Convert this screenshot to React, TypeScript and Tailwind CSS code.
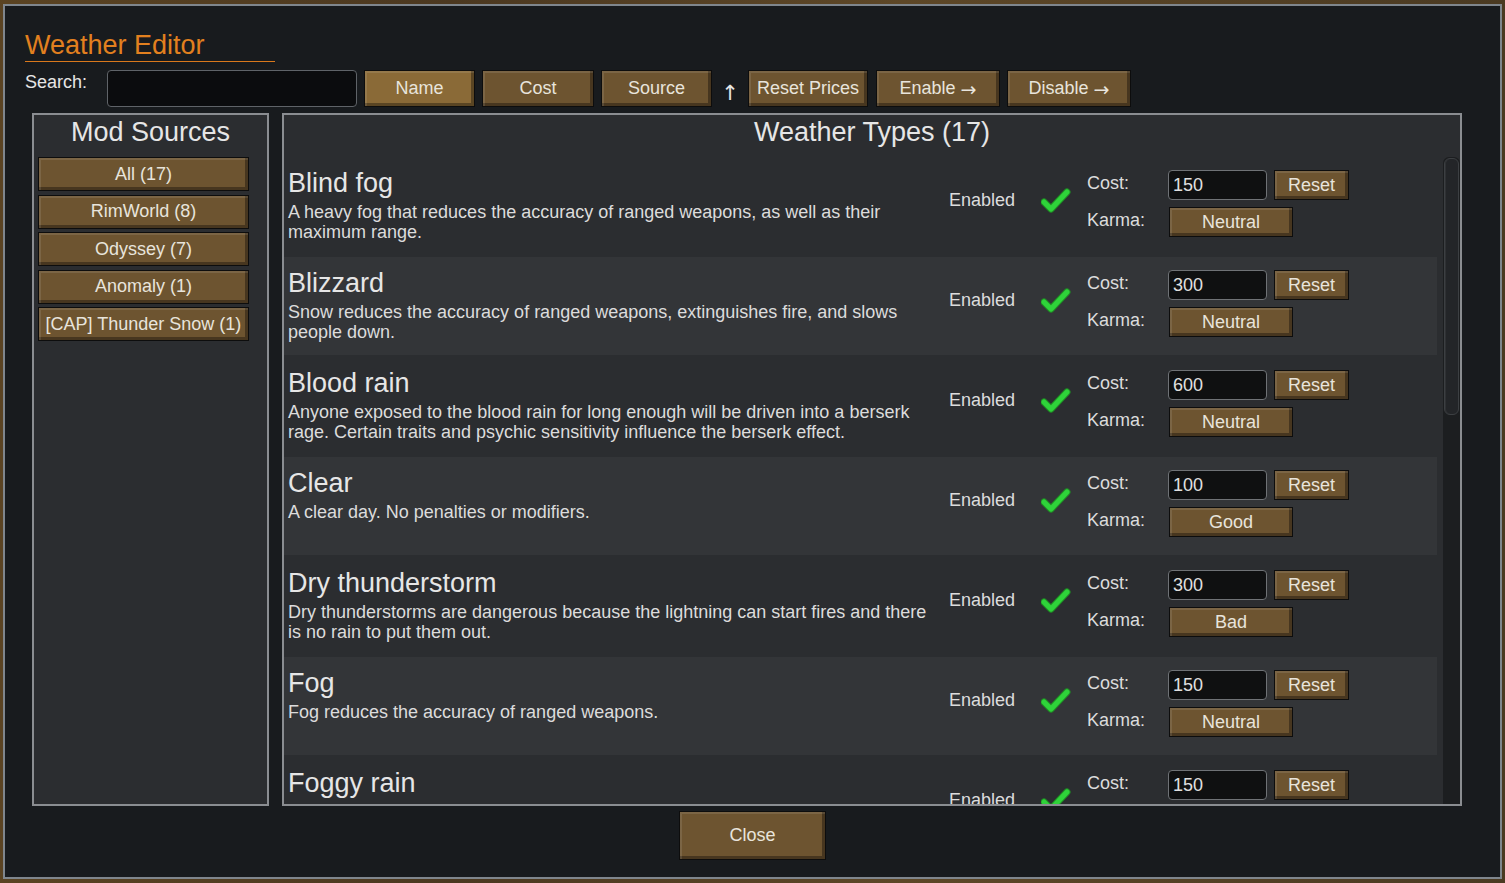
import React from "react";

const FONT = { fontFamily: '"Liberation Sans", Arial, sans-serif' };
const ARROW = { fontFamily: '"DejaVu Sans", sans-serif' };

type Row = { name: string; desc: string[]; cost: string; karma: string };

const rows: Row[] = [
  {
    name: "Blind fog",
    desc: [
      "A heavy fog that reduces the accuracy of ranged weapons, as well as their",
      "maximum range.",
    ],
    cost: "150",
    karma: "Neutral",
  },
  {
    name: "Blizzard",
    desc: [
      "Snow reduces the accuracy of ranged weapons, extinguishes fire, and slows",
      "people down.",
    ],
    cost: "300",
    karma: "Neutral",
  },
  {
    name: "Blood rain",
    desc: [
      "Anyone exposed to the blood rain for long enough will be driven into a berserk",
      "rage. Certain traits and psychic sensitivity influence the berserk effect.",
    ],
    cost: "600",
    karma: "Neutral",
  },
  {
    name: "Clear",
    desc: ["A clear day. No penalties or modifiers."],
    cost: "100",
    karma: "Good",
  },
  {
    name: "Dry thunderstorm",
    desc: [
      "Dry thunderstorms are dangerous because the lightning can start fires and there",
      "is no rain to put them out.",
    ],
    cost: "300",
    karma: "Bad",
  },
  {
    name: "Fog",
    desc: ["Fog reduces the accuracy of ranged weapons."],
    cost: "150",
    karma: "Neutral",
  },
  {
    name: "Foggy rain",
    desc: [
      "Fog and rain reduce the accuracy of ranged weapons, and rain slows people down.",
      "Rain also extinguishes fires.",
    ],
    cost: "150",
    karma: "Neutral",
  },
];

function Btn({
  children,
  className = "",
  light = false,
}: {
  children: React.ReactNode;
  className?: string;
  light?: boolean;
}) {
  return (
    <div
      className={`flex items-center justify-center border border-[#0d0d0d] text-[#e8e4dc] text-[18px] shadow-[inset_2px_2px_0_rgba(255,255,255,0.10),inset_-3px_-3px_0_rgba(0,0,0,0.35)] ${
        light ? "bg-[#8a6a37]" : "bg-[#6d5430]"
      } ${className}`}
    >
      {children}
    </div>
  );
}

function Check() {
  return (
    <svg width="30" height="26" viewBox="0 0 30 26">
      <path
        d="M3 14 L10 21 L26 4"
        fill="none"
        stroke="#1f8f24"
        strokeWidth="7"
        strokeLinecap="round"
        strokeLinejoin="round"
      />
      <path
        d="M3 14 L10 21 L26 4"
        fill="none"
        stroke="#2fd33a"
        strokeWidth="5"
        strokeLinecap="round"
        strokeLinejoin="round"
      />
    </svg>
  );
}

function WeatherRow({ row, alt }: { row: Row; alt: boolean }) {
  return (
    <div className="h-[100px] shrink-0">
      <div className={`flex h-[98px] ${alt ? "bg-[#333538]" : ""}`}>
        <div className="w-[665px] pl-[4px] pt-[11px]">
          <div className="text-[27px] leading-[30px] text-[#e6e6e6]">{row.name}</div>
          <div className="mt-[4px] text-[18px] leading-[20px] text-[#dcdcdc]">
            {row.desc.map((l, i) => (
              <div key={i} className="whitespace-nowrap">
                {l}
              </div>
            ))}
          </div>
        </div>
        <div className="w-[92px] pt-[31px] text-[18px] leading-[24px] text-[#dcdcdc]">
          Enabled
        </div>
        <div className="w-[46px] pt-[31px]">
          <Check />
        </div>
        <div className="flex flex-col">
          <div className="mt-[13px] flex h-[30px] items-start">
            <div className="w-[81px] text-[18px] leading-[26px] text-[#dcdcdc]">Cost:</div>
            <div className="flex h-[30px] w-[99px] items-center rounded-[4px] border border-[#6f7276] bg-[#0f1011] pl-[4px] text-[18px] text-[#e0e0e0]">
              {row.cost}
            </div>
            <Btn className="ml-[7px] h-[30px] w-[75px]">Reset</Btn>
          </div>
          <div className="mt-[7px] flex h-[30px] items-start">
            <div className="w-[81px] text-[18px] leading-[26px] text-[#dcdcdc]">Karma:</div>
            <Btn className="ml-[1px] h-[30px] w-[124px]">{row.karma}</Btn>
          </div>
        </div>
      </div>
    </div>
  );
}

export default function App() {
  const sources = ["All (17)", "RimWorld (8)", "Odyssey (7)", "Anomaly (1)", "[CAP] Thunder Snow (1)"];
  return (
    <div
      style={FONT}
      className="h-[883px] w-[1505px] overflow-hidden bg-[linear-gradient(90deg,#5a4322,#4b3820_30%,#5d4727_60%,#4a3a22)] pl-[3px] pt-[4px]"
    >
      <div className="flex h-[875px] w-[1499px] flex-col border-2 border-[#7f868d] bg-[#181b1e]">
        {/* Title */}
        <div className="ml-[20px] mt-[24px] w-[250px] border-b border-[#d9781c] text-[27px] leading-[31px] text-[#e2801f]">
          Weather Editor
        </div>

        {/* Search row */}
        <div className="ml-[20px] mt-[8px] flex h-[37px] items-start">
          <div className="w-[82px] text-[18px] leading-[24px] text-[#e6e6e6]">Search:</div>
          <div className="h-[37px] w-[250px] rounded-[4px] border border-[#5f6368] bg-[#0b0c0e]" />
          <Btn light className="ml-[7px] h-[37px] w-[111px]">Name</Btn>
          <Btn className="ml-[7px] h-[37px] w-[112px]">Cost</Btn>
          <Btn className="ml-[7px] h-[37px] w-[111px]">Source</Btn>
          <div
            style={ARROW}
            className="w-[36px] pt-[10px] text-center text-[21px] leading-[26px] text-[#e6e6e6]"
          >
            ↑
          </div>
          <Btn className="h-[37px] w-[120px]">Reset Prices</Btn>
          <Btn className="ml-[8px] h-[37px] w-[124px]">
            Enable&nbsp;
            <span style={ARROW} className="text-[19px] leading-[20px]">
              →
            </span>
          </Btn>
          <Btn className="ml-[7px] h-[37px] w-[124px]">
            Disable&nbsp;
            <span style={ARROW} className="text-[19px] leading-[20px]">
              →
            </span>
          </Btn>
        </div>

        {/* Panels */}
        <div className="ml-[27px] mt-[6px] flex h-[693px] gap-[13px]">
          <div className="flex w-[237px] flex-col border-2 border-[#8a8d91] bg-[#2b2d30]">
            <div className="flex h-[42px] items-center justify-center pb-[8px] text-[27px] leading-[32px] text-[#e6e6e6]">
              Mod Sources
            </div>
            <div className="ml-[4px] flex flex-col gap-[3.5px]">
              {sources.map((s) => (
                <Btn key={s} className="h-[34px] w-[211px]">
                  {s}
                </Btn>
              ))}
            </div>
          </div>

          <div className="flex w-[1180px] flex-col border-2 border-[#8a8d91] bg-[#2b2d30]">
            <div className="flex h-[42px] shrink-0 items-center justify-center pb-[8px] text-[27px] leading-[32px] text-[#e6e6e6]">
              Weather Types (17)
            </div>
            <div className="flex min-h-0 flex-1">
              <div className="flex w-[1153px] flex-col overflow-hidden">
                {rows.map((r, i) => (
                  <WeatherRow key={r.name} row={r} alt={i % 2 === 1} />
                ))}
              </div>
              <div className="ml-[6px] w-[17px] rounded-t-[6px] bg-[#1c1e20] pt-[1px]">
                <div className="mx-auto h-[257px] w-[15px] rounded-[6px] border border-[#3c3f42] bg-[#232528] shadow-[inset_1px_0_0_rgba(255,255,255,0.06)]" />
              </div>
            </div>
          </div>
        </div>

        {/* Close */}
        <div className="mt-[5px] flex justify-center">
          <Btn className="h-[49px] w-[147px]">Close</Btn>
        </div>
      </div>
    </div>
  );
}
